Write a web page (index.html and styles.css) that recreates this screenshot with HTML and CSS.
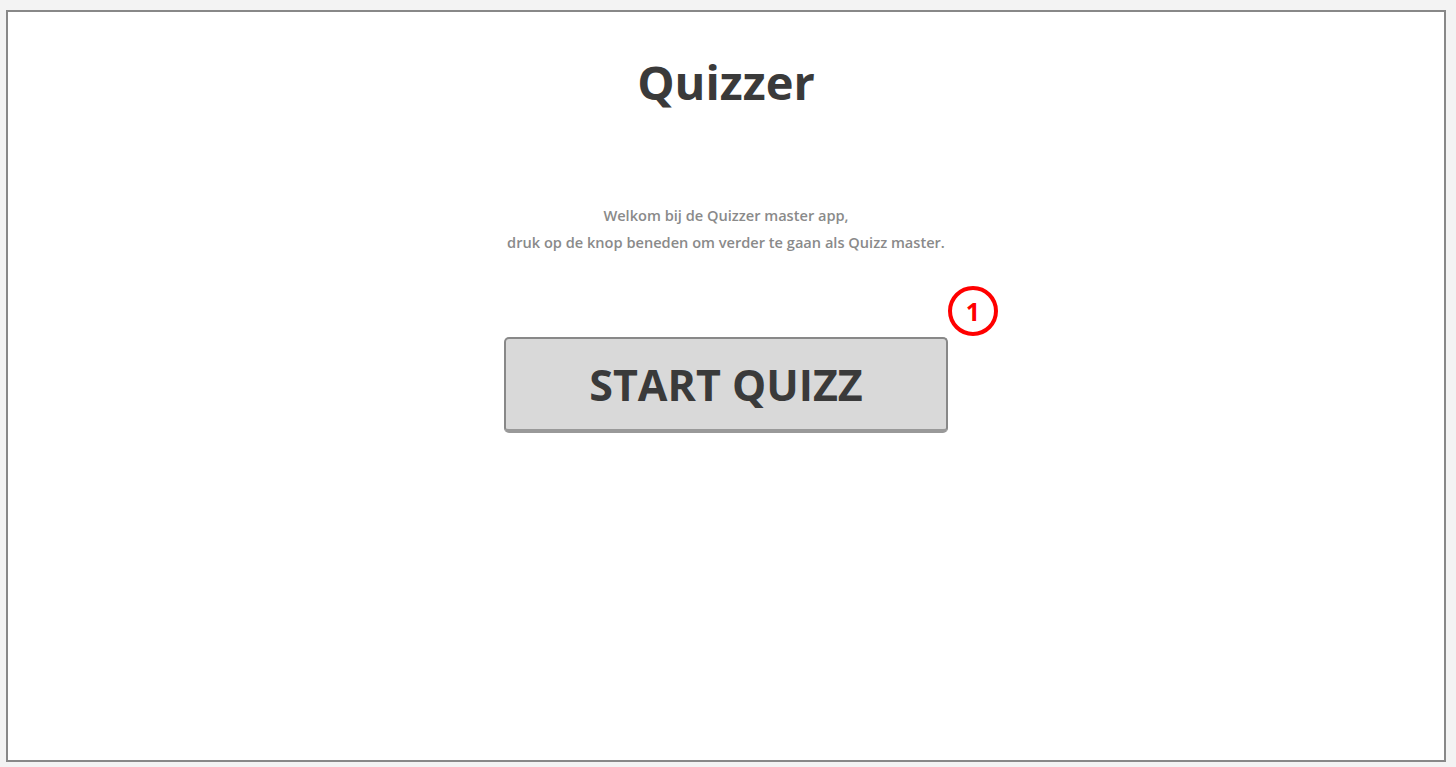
FILE: index.html
```html
<!DOCTYPE html>
<html lang="nl">
<head>
<meta charset="utf-8">
<title>Quizzer</title>
<link rel="stylesheet" href="styles.css">
</head>
<body>
<main class="frame">
  <h1 class="title">Quizzer</h1>
  <p class="intro">Welkom bij de Quizzer master app,<br>druk op de knop beneden om verder te gaan als Quizz master.</p>
  <div class="action">
    <button class="start-btn" type="button">START QUIZZ</button>
    <span class="marker">1</span>
  </div>
</main>
</body>
</html>
```
FILE: styles.css
```css
html, body {
  margin: 0;
  padding: 0;
  height: 100%;
}
body {
  background: #f3f3f3;
  padding: 10px 10px 5px 6px;
  box-sizing: border-box;
  font-family: "Open Sans", "Noto Sans", sans-serif;
}
.frame {
  box-sizing: border-box;
  height: 752px;
  width: 1440px;
  background: #fff;
  border: 2px solid #888;
  display: flex;
  flex-direction: column;
  align-items: center;
}
.title {
  margin: 40px 0 0;
  font-size: 47px;
  font-weight: 700;
  color: #3a3a3a;
  line-height: 60px;
}
.intro {
  margin: 90px 0 0;
  font-size: 14.6px;
  line-height: 27px;
  font-weight: 600;
  color: #8a8a8a;
  text-align: center;
}
.action {
  position: relative;
  margin-top: 81px;
}
.start-btn {
  box-sizing: border-box;
  width: 444px;
  height: 96px;
  background: #d9d9d9;
  border: 2px solid #888;
  border-bottom: 4px solid #999;
  border-radius: 5px;
  font-family: inherit;
  font-size: 43px;
  font-weight: 700;
  color: #3a3a3a;
  padding: 0;
  display: block;
}
.marker {
  position: absolute;
  left: 444px;
  top: -51px;
  width: 50px;
  height: 50px;
  box-sizing: border-box;
  border: 4px solid #f00;
  border-radius: 50%;
  color: #f00;
  font-size: 25px;
  font-weight: 700;
  display: flex;
  align-items: center;
  justify-content: center;
  line-height: 1;
}
```
